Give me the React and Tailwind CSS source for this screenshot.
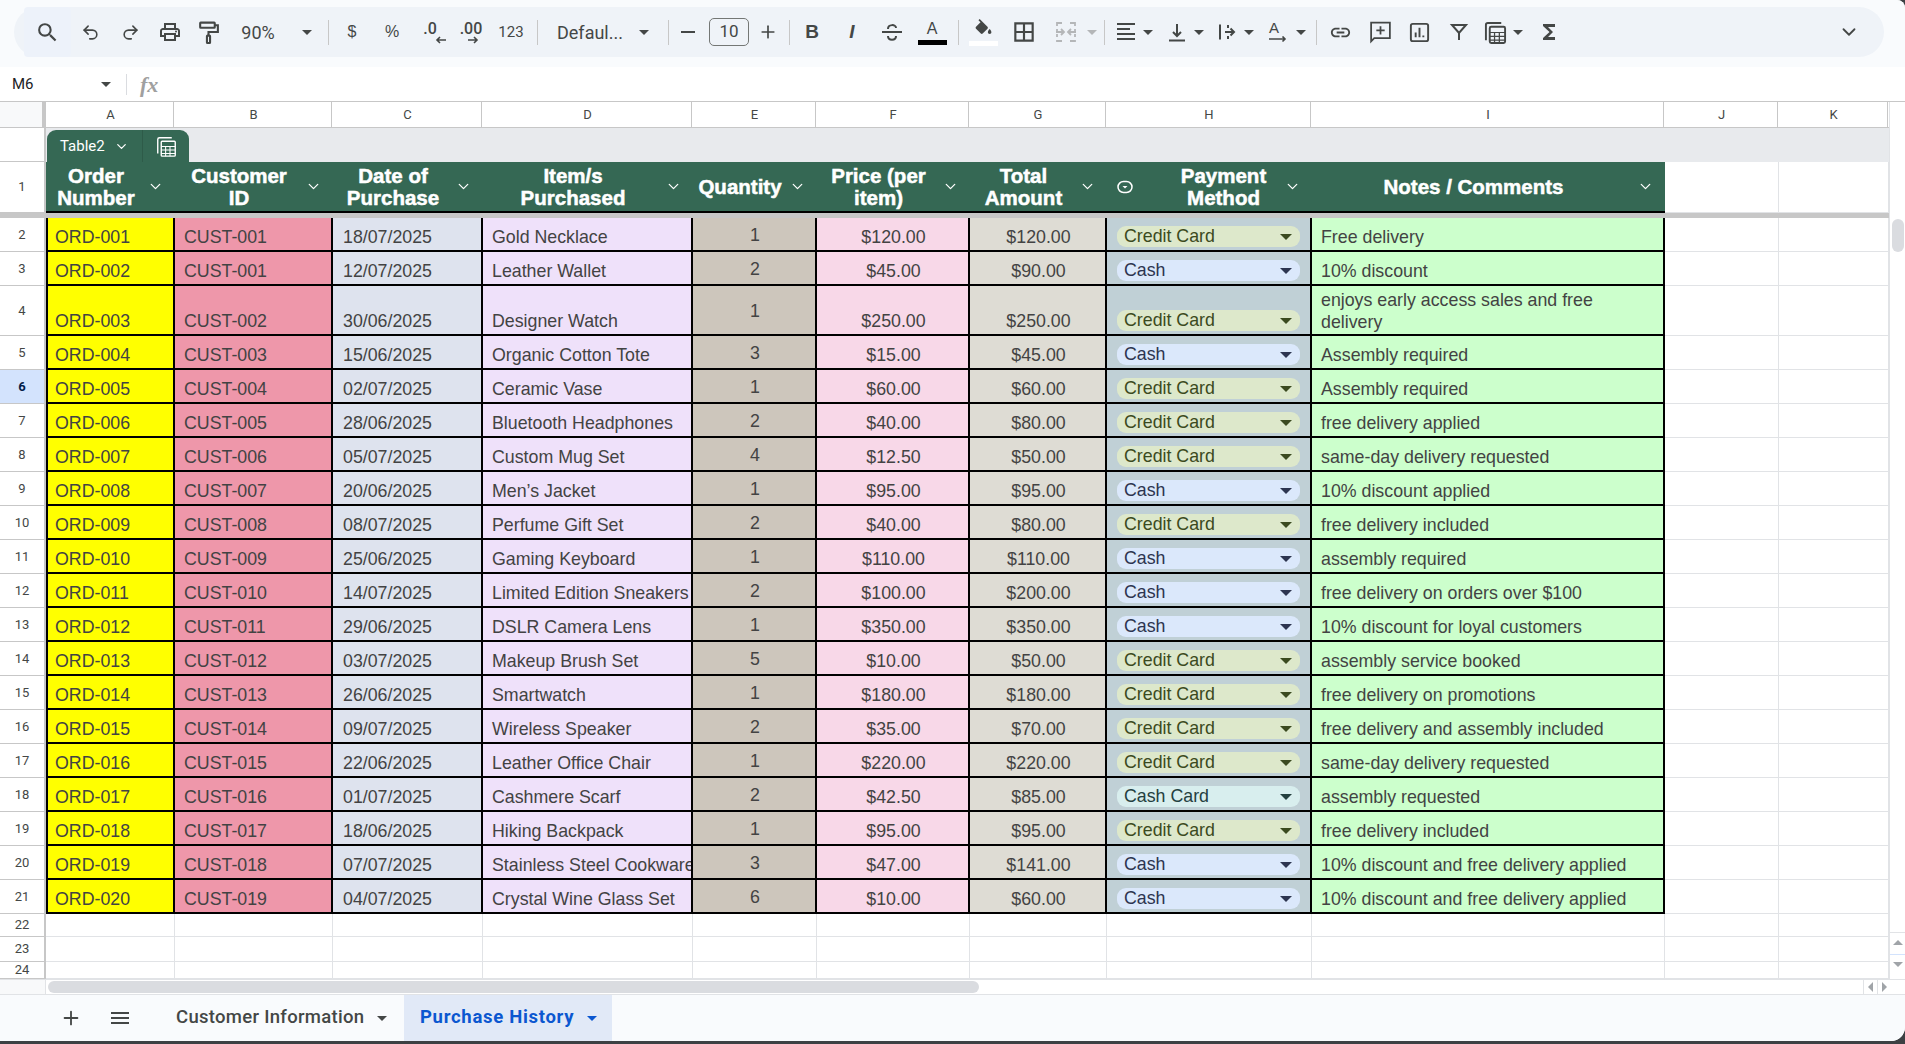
import { ChevronDown, Plus, Redo2, Undo2 } from "lucide-react"

const orders = [
    ["ORD-001", "CUST-001", "18/07/2025", "Gold Necklace", "1", "$120.00", "$120.00", "Credit Card", "Free delivery"],
    ["ORD-002", "CUST-001", "12/07/2025", "Leather Wallet", "2", "$45.00", "$90.00", "Cash", "10% discount"],
    ["ORD-003", "CUST-002", "30/06/2025", "Designer Watch", "1", "$250.00", "$250.00", "Credit Card", "enjoys early access sales and free delivery"],
    ["ORD-004", "CUST-003", "15/06/2025", "Organic Cotton Tote", "3", "$15.00", "$45.00", "Cash", "Assembly required"],
    ["ORD-005", "CUST-004", "02/07/2025", "Ceramic Vase", "1", "$60.00", "$60.00", "Credit Card", "Assembly required"],
    ["ORD-006", "CUST-005", "28/06/2025", "Bluetooth Headphones", "2", "$40.00", "$80.00", "Credit Card", "free delivery applied"],
    ["ORD-007", "CUST-006", "05/07/2025", "Custom Mug Set", "4", "$12.50", "$50.00", "Credit Card", "same-day delivery requested"],
    ["ORD-008", "CUST-007", "20/06/2025", "Men’s Jacket", "1", "$95.00", "$95.00", "Cash", "10% discount applied"],
    ["ORD-009", "CUST-008", "08/07/2025", "Perfume Gift Set", "2", "$40.00", "$80.00", "Credit Card", "free delivery included"],
    ["ORD-010", "CUST-009", "25/06/2025", "Gaming Keyboard", "1", "$110.00", "$110.00", "Cash", "assembly required"],
    ["ORD-011", "CUST-010", "14/07/2025", "Limited Edition Sneakers", "2", "$100.00", "$200.00", "Cash", "free delivery on orders over $100"],
    ["ORD-012", "CUST-011", "29/06/2025", "DSLR Camera Lens", "1", "$350.00", "$350.00", "Cash", "10% discount for loyal customers"],
    ["ORD-013", "CUST-012", "03/07/2025", "Makeup Brush Set", "5", "$10.00", "$50.00", "Credit Card", "assembly service booked"],
    ["ORD-014", "CUST-013", "26/06/2025", "Smartwatch", "1", "$180.00", "$180.00", "Credit Card", "free delivery on promotions"],
    ["ORD-015", "CUST-014", "09/07/2025", "Wireless Speaker", "2", "$35.00", "$70.00", "Credit Card", "free delivery and assembly included"],
    ["ORD-016", "CUST-015", "22/06/2025", "Leather Office Chair", "1", "$220.00", "$220.00", "Credit Card", "same-day delivery requested"],
    ["ORD-017", "CUST-016", "01/07/2025", "Cashmere Scarf", "2", "$42.50", "$85.00", "Cash Card", "assembly requested"],
    ["ORD-018", "CUST-017", "18/06/2025", "Hiking Backpack", "1", "$95.00", "$95.00", "Credit Card", "free delivery included"],
    ["ORD-019", "CUST-018", "07/07/2025", "Stainless Steel Cookware", "3", "$47.00", "$141.00", "Cash", "10% discount and free delivery applied"],
    ["ORD-020", "CUST-019", "04/07/2025", "Crystal Wine Glass Set", "6", "$10.00", "$60.00", "Cash", "10% discount and free delivery applied"],
]

const widths = ["w-[129px]", "w-[158px]", "w-[150px]", "w-[210px]", "w-[124px]", "w-[153px]", "w-[137px]", "w-[205px]", "w-[353px]", "w-[114px]", "w-[110px]"]
const letters = ["A", "B", "C", "D", "E", "F", "G", "H", "I", "J", "K"]

const chipStyles = {
    "Credit Card": "bg-[#dde8cb] text-[#3b4a20]",
    Cash: "bg-[#dbe8fb] text-[#2d3550]",
    "Cash Card": "bg-[#d8eeee] text-[#24403f]",
}

function Svg({ children, size = 22, className = "" }) {
    return (
        <svg viewBox="0 0 24 24" width={size} height={size} fill="#444746" className={className}>
            {children}
        </svg>
    )
}

function Caret({ color = "#444746", className = "h-[5px] w-[10px]" }) {
    return (
        <svg viewBox="0 0 10 5" className={className}>
            <path d="M0 0h10L5 5z" fill={color} />
        </svg>
    )
}

function Sep({ className }) {
    return <div className={`h-[25px] w-px shrink-0 bg-[#c7c7c7] ${className}`} />
}

function Tool({ className, children }) {
    return <div className={`flex h-full shrink-0 items-center justify-center ${className}`}>{children}</div>
}

function DecimalIcon({ label, right }) {
    return (
        <div className="flex flex-col items-center font-['Roboto',sans-serif] text-[#444746]">
            <span className="text-[16px] font-medium leading-[15px]">{label}</span>
            <svg viewBox="0 0 11 8" width="11" height="8" className={right ? "ml-[5px]" : "ml-[20px]"}>
                <path d={right ? "M0 4h9M6 1l3 3-3 3" : "M11 4H2M5 1L2 4l3 3"} fill="none" stroke="#444746" strokeWidth="1.6" />
            </svg>
        </div>
    )
}

function Toolbar() {
    return (
        <div className="h-[67px] shrink-0 bg-[#f9fbfd] px-[14px] pt-[7px]">
            <div className="flex h-[50px] w-[1870px] items-center rounded-[25px] bg-[#eff3f8] pl-[10px] pr-[15px] text-[#444746]">
                <Tool className="w-[47px] rounded-[4px] bg-[#edf2fa]">
                    <Svg size={25}><path d="M15.5 14h-.79l-.28-.27A6.471 6.471 0 0 0 16 9.5 6.5 6.5 0 1 0 9.5 16c1.61 0 3.09-.59 4.23-1.57l.27.28v.79l5 4.99L20.49 19l-4.99-5zm-6 0C7.01 14 5 11.99 5 9.5S7.01 5 9.5 5 14 7.01 14 9.5 11.99 14 9.5 14z" /></Svg>
                </Tool>
                <Tool className="w-[39px]"><Undo2 size={19} strokeWidth={2} color="#444746" /></Tool>
                <Tool className="w-[40px]"><Redo2 size={19} strokeWidth={2} color="#444746" /></Tool>
                <Tool className="w-[39px]">
                    <Svg size={24}><path d="M19 8h-1V3H6v5H5c-1.66 0-3 1.34-3 3v6h4v4h12v-4h4v-6c0-1.66-1.34-3-3-3zM8 5h8v3H8V5zm8 14H8v-4h8v4zm4-4h-2v-2H6v2H4v-4c0-.55.45-1 1-1h14c.55 0 1 .45 1 1v4z" /><circle cx="18" cy="11.5" r="1" /></Svg>
                </Tool>
                <Tool className="w-[39px]">
                    <svg viewBox="0 0 24 24" width="25" height="25" fill="none" stroke="#444746" strokeWidth="2">
                        <rect x="4" y="2.5" width="14" height="5" rx="0.5" />
                        <path d="M18 5h3v6.5h-9V15" />
                        <rect x="10.5" y="15" width="3" height="7" rx="0.5" />
                    </svg>
                </Tool>
                <Tool className="w-[60px] font-['Roboto',sans-serif] text-[18px]">90%</Tool>
                <Tool className="w-[38px]"><Caret /></Tool>
                <Sep className="ml-[2px] mr-[2px]" />
                <Tool className="w-[42px] text-[16px]">$</Tool>
                <Tool className="w-[38px] text-[16px]">%</Tool>
                <Tool className="w-[38px]"><DecimalIcon label=".0" /></Tool>
                <Tool className="w-[44px]"><DecimalIcon label=".00" right /></Tool>
                <Tool className="w-[36px] font-['Roboto',sans-serif] text-[15px]">123</Tool>
                <Sep className="ml-[8px]" />
                <Tool className="ml-[7px] w-[90px] font-['Roboto',sans-serif] text-[18px]">Defaul...</Tool>
                <Tool className="w-[18px]"><Caret /></Tool>
                <Sep className="ml-[15px]" />
                <Tool className="w-[38px]"><div className="h-[2px] w-[14px] bg-[#444746]" /></Tool>
                <div className="ml-[2px] flex h-[28px] w-[40px] shrink-0 items-center justify-center rounded-[5px] border border-[#747775] font-['Roboto',sans-serif] text-[17px]">10</div>
                <Tool className="w-[38px]"><Plus size={20} strokeWidth={2} color="#444746" /></Tool>
                <Sep className="ml-[2px]" />
                <Tool className="w-[44px] text-[19px] font-bold">B</Tool>
                <Tool className="w-[36px] text-[19px] font-bold italic">I</Tool>
                <Tool className="w-[44px]">
                    <svg viewBox="0 0 24 24" width="24" height="24" fill="none" stroke="#444746" strokeWidth="2">
                        <path d="M2 12h20M8 9c0-5 8-5 8-1M8 16c0 5 8 5 8 0" />
                    </svg>
                </Tool>
                <Tool className="w-[36px]">
                    <div className="flex w-[29px] flex-col items-center">
                        <span className="text-[16px] leading-[18px]">A</span>
                        <div className="mt-[2px] h-[5px] w-full bg-black" />
                    </div>
                </Tool>
                <Sep className="ml-[8px]" />
                <Tool className="w-[48px]">
                    <div className="flex w-[29px] flex-col items-center">
                        <Svg size={21}><path d="M16.56 8.94L7.62 0 6.21 1.41l2.38 2.38-5.15 5.15c-.59.59-.59 1.54 0 2.12l5.5 5.5c.29.29.68.44 1.06.44s.77-.15 1.06-.44l5.5-5.5c.59-.58.59-1.53 0-2.12z" /><path d="M19 11.5s-2 2.17-2 3.5c0 1.1.9 2 2 2s2-.9 2-2c0-1.33-2-3.5-2-3.5z" /></Svg>
                        <div className="mt-[1px] h-[5px] w-full bg-white" />
                    </div>
                </Tool>
                <Tool className="w-[34px]">
                    <Svg size={26}><path d="M3 3v18h18V3H3zm8 16H5v-6h6v6zm0-8H5V5h6v6zm8 8h-6v-6h6v6zm0-8h-6V5h6v6z" /></Svg>
                </Tool>
                <Tool className="ml-[5px] w-[40px]">
                    <svg viewBox="0 0 24 24" width="24" height="24" fill="none" stroke="#b4b6b8" strokeWidth="1.8">
                        <path d="M8 3H3v3M3 9v2M3 14v3M3 20v1h5M16 3h5v3M21 9v2M21 14v3M21 20v1h-5M2 12h7M7 9l3 3-3 3M22 12h-7M17 9l-3 3 3 3" />
                    </svg>
                </Tool>
                <Tool className="w-[12px]"><Caret color="#b4b6b8" /></Tool>
                <Sep className="ml-[6px]" />
                <Tool className="ml-[5px] w-[32px]">
                    <svg viewBox="0 0 24 24" width="24" height="24" fill="none" stroke="#444746" strokeWidth="2">
                        <path d="M3 4h18M3 9h13M3 14h18M3 19h18" />
                    </svg>
                </Tool>
                <Tool className="w-[12px]"><Caret /></Tool>
                <Tool className="ml-[7px] w-[32px]">
                    <svg viewBox="0 0 24 24" width="24" height="24" fill="none" stroke="#444746" strokeWidth="2">
                        <path d="M12 4v12M8 12l4 4 4-4M4 20.5h16" />
                    </svg>
                </Tool>
                <Tool className="w-[12px]"><Caret /></Tool>
                <Tool className="ml-[6px] w-[32px]">
                    <svg viewBox="0 0 24 24" width="24" height="24" fill="none" stroke="#444746" strokeWidth="2">
                        <path d="M5 4.5v15M13 5v3M13 16v3M10 12h9M15.5 8.5l3.5 3.5-3.5 3.5" />
                    </svg>
                </Tool>
                <Tool className="w-[12px]"><Caret /></Tool>
                <Tool className="ml-[7px] w-[32px]">
                    <div className="flex h-[24px] w-[18px] flex-col items-start">
                        <span className="text-[15px] leading-[16px]">A</span>
                        <svg viewBox="0 0 18 8" width="18" height="8">
                            <path d="M0 3h16M13.5 0.5L16 3l-2.5 2.5" fill="none" stroke="#444746" strokeWidth="1.6" />
                        </svg>
                    </div>
                </Tool>
                <Tool className="ml-[1px] w-[12px]"><Caret /></Tool>
                <Sep className="ml-[9px]" />
                <Tool className="ml-[5px] w-[36px]">
                    <Svg size={23}><path d="M3.9 12c0-1.71 1.39-3.1 3.1-3.1h4V7H7c-2.76 0-5 2.24-5 5s2.24 5 5 5h4v-1.9H7c-1.71 0-3.1-1.39-3.1-3.1zM8 13h8v-2H8v2zm9-6h-4v1.9h4c1.71 0 3.1 1.39 3.1 3.1s-1.39 3.1-3.1 3.1h-4V17h4c2.76 0 5-2.24 5-5s-2.24-5-5-5z" /></Svg>
                </Tool>
                <Tool className="w-[44px]">
                    <svg viewBox="0 0 24 24" width="25" height="25" fill="none" stroke="#444746" strokeWidth="1.7">
                        <path d="M3 2.5h18v15H6l-3 3zM12 6v8M8 10h8" />
                    </svg>
                </Tool>
                <Tool className="w-[34px]">
                    <svg viewBox="0 0 24 24" width="23" height="23" fill="none" stroke="#444746" strokeWidth="2">
                        <rect x="3" y="3" width="18" height="18" rx="2" />
                        <path d="M8 17v-5M12 17V7M16 17v-2" />
                    </svg>
                </Tool>
                <Tool className="w-[46px]">
                    <svg viewBox="0 0 24 24" width="24" height="24" fill="none" stroke="#444746" strokeWidth="2">
                        <path d="M5 5h14l-7 8zM12 13v7" />
                    </svg>
                </Tool>
                <Tool className="w-[26px]">
                    <svg viewBox="0 0 24 24" width="23" height="23" fill="none" stroke="#444746" strokeWidth="2">
                        <path d="M18 2H4a2 2 0 0 0-2 2v16" />
                        <rect x="6" y="6" width="16" height="17" rx="1.5" />
                        <path d="M6 12h16M6 16h16M6 20h16M11 12v11M16 12v11" strokeWidth="1.3" />
                    </svg>
                </Tool>
                <Tool className="ml-[4px] w-[12px]"><Caret /></Tool>
                <Tool className="ml-[6px] w-[38px]">
                    <Svg size={24}><path d="M18 4H6v2l6.5 6L6 18v2h12v-3h-7l5-5-5-5h7z" /></Svg>
                </Tool>
                <Tool className="ml-auto w-[40px]"><ChevronDown size={22} strokeWidth={2} color="#444746" /></Tool>
            </div>
        </div>
    )
}

function FormulaBar() {
    return (
        <div className="flex h-[35px] shrink-0 items-center border-b border-[#c7c7c7] bg-white">
            <div className="w-[90px] pl-[12px] font-['Roboto',sans-serif] text-[15px] text-[#202124]">M6</div>
            <Caret className="ml-[11px] h-[5px] w-[10px]" />
            <div className="ml-[15px] h-[21px] w-px bg-[#dadce0]" />
            <span className="ml-[13px] font-['Liberation_Serif',serif] text-[22px] font-bold italic text-[#a0a0a0]">fx</span>
        </div>
    )
}

function ColumnHeaders() {
    return (
        <div className="flex h-[26px] shrink-0 border-b border-[#c7c7c7]">
            <div className="w-[46px] shrink-0 border-r-[4px] border-[#c7c7c7] bg-[#f8f9fa]" />
            {letters.map((letter, i) => (
                <div
                    key={letter}
                    className={`${i === 0 ? "w-[128px]" : widths[i]} flex shrink-0 items-center justify-center border-r border-[#c7c7c7] pl-[2px] font-['Roboto',sans-serif] text-[13px] text-[#444746]`}
                >
                    {letter}
                </div>
            ))}
        </div>
    )
}

function RowNumber({ n, selected }) {
    return (
        <div
            className={`flex w-[46px] shrink-0 items-center justify-center border-b border-r-2 border-[#c7c7c7] font-['Roboto',sans-serif] text-[13px] ${selected ? "bg-[#d3e3fd] font-bold text-[#041e49]" : "bg-white text-[#444746]"}`}
        >
            {n}
        </div>
    )
}

function BlankCells({ cols }) {
    return cols.map((i) => (
        <div key={i} className={`${widths[i]} shrink-0 border-b border-r border-[#e1e3e6] bg-white`} />
    ))
}

function HeaderCell({ i, label, dropdown }) {
    return (
        <div className={`${widths[i]} flex shrink-0 items-center ${i === 0 ? "pl-[1px]" : ""}`}>
            {dropdown && (
                <div className="w-[58px] shrink-0 pl-[9px]">
                    <svg viewBox="0 0 18 18" width="18" height="18" fill="none" stroke="white" strokeWidth="1.5">
                        <rect x="2" y="3.5" width="14" height="11" rx="5.5" />
                        <path d="M6.5 8h5L9 10.5z" fill="white" stroke="none" />
                    </svg>
                </div>
            )}
            <div className="min-w-0 flex-1 whitespace-pre-line text-center text-[20.5px] font-bold leading-[22px] text-white [-webkit-text-stroke:0.5px_white]">
                {label}
            </div>
            <div className="mr-[10px] flex w-[20px] shrink-0 justify-center">
                <ChevronDown size={17} strokeWidth={1.8} color="white" />
            </div>
        </div>
    )
}

function TableBand() {
    return (
        <div className="flex h-[34px] shrink-0 bg-[#e8eaed]">
            <div className="w-[46px] shrink-0 border-b border-r-2 border-[#c7c7c7] bg-white" />
            <div className="ml-[1px] mt-[2px] flex h-[32px] w-[142px] rounded-t-[9px] bg-[#356854] text-white">
                <div className="flex w-[96px] items-center border-r border-[#2e5b49] pl-[13px] font-['Roboto',sans-serif] text-[15px]">
                    Table2
                    <ChevronDown size={15} strokeWidth={2} className="ml-[9px]" />
                </div>
                <div className="flex flex-1 items-center justify-center">
                    <svg viewBox="0 0 24 24" width="21" height="21" fill="none" stroke="white" strokeWidth="1.6">
                        <path d="M18 2H4a2 2 0 0 0-2 2v16" />
                        <rect x="6" y="6" width="16" height="17" rx="1" />
                        <path d="M6 12h16M6 16h16M6 20h16M11 12v11M16 12v11" strokeWidth="1.2" />
                    </svg>
                </div>
            </div>
        </div>
    )
}

function TableHeader() {
    const labels = ["Order\nNumber", "Customer\nID", "Date of\nPurchase", "Item/s\nPurchased", "Quantity", "Price (per\nitem)", "Total\nAmount", "Payment\nMethod", "Notes / Comments"]
    return (
        <div className="flex h-[51px] shrink-0">
            <RowNumber n={1} />
            <div className="flex border-b-2 border-black bg-[#356854]">
                {labels.map((label, i) => (
                    <HeaderCell key={label} i={i} label={label} dropdown={i === 7} />
                ))}
            </div>
            <BlankCells cols={[9, 10]} />
        </div>
    )
}

function DataCell({ className, children }) {
    return (
        <div className={`flex shrink-0 overflow-hidden border-b-2 border-r-2 border-black pb-[1px] text-[17.8px] leading-[24px] text-[#434343] ${className}`}>
            {children}
        </div>
    )
}

function Chip({ value }) {
    return (
        <div className={`mb-[2px] ml-[1px] flex h-[21px] w-[183px] items-center justify-between rounded-[9px] pl-[7px] pr-[8px] ${chipStyles[value]}`}>
            <span className="leading-[21px]">{value}</span>
            <Caret color="currentColor" className="h-[6px] w-[12px]" />
        </div>
    )
}

function DataRow({ row, index }) {
    const height = index === 2 ? "h-[50px]" : "h-[34px]"
    return (
        <div className={`flex shrink-0 ${height}`}>
            <RowNumber n={index + 2} selected={index === 4} />
            <DataCell className={`${widths[0]} items-end whitespace-nowrap border-l-2 bg-[#ffff00] pl-[7px] text-[#4c4c00]`}>{row[0]}</DataCell>
            <DataCell className={`${widths[1]} items-end whitespace-nowrap bg-[#ee97aa] pl-[9px]`}>{row[1]}</DataCell>
            <DataCell className={`${widths[2]} items-end whitespace-nowrap bg-[#dee3ee] pl-[10px]`}>{row[2]}</DataCell>
            <DataCell className={`${widths[3]} items-end whitespace-nowrap bg-[#efe1fa] pl-[9px]`}>{row[3]}</DataCell>
            <DataCell className={`${widths[4]} items-center justify-center whitespace-nowrap bg-[#cdc6bc] pl-[2px] pt-[3px]`}>{row[4]}</DataCell>
            <DataCell className={`${widths[5]} items-end justify-center whitespace-nowrap bg-[#f8d8e8] pl-[2px]`}>{row[5]}</DataCell>
            <DataCell className={`${widths[6]} items-end justify-center whitespace-nowrap bg-[#dedcd4] pl-[2px]`}>{row[6]}</DataCell>
            <DataCell className={`${widths[7]} items-end whitespace-nowrap bg-[#c0d0d6] pl-[9px]`}><Chip value={row[7]} /></DataCell>
            <DataCell className={`${widths[8]} items-end whitespace-normal bg-[#ccffcc] pl-[9px] pr-[10px]`}>
                <span className={index === 2 ? "block max-w-[290px] leading-[22px]" : "block leading-[24px]"}>{row[8]}</span>
            </DataCell>
            <BlankCells cols={[9, 10]} />
        </div>
    )
}

function EmptyRow({ n, height }) {
    return (
        <div className={`flex shrink-0 ${height}`}>
            <RowNumber n={n} />
            <BlankCells cols={[0, 1, 2, 3, 4, 5, 6, 7, 8, 9, 10]} />
        </div>
    )
}

function VerticalScrollbar() {
    return (
        <div className="flex w-[16px] shrink-0 flex-col items-center border-l border-[#e1e3e6] bg-white pt-[117px]">
            <div className="h-[33px] w-[12px] rounded-[6px] bg-[#dadce0]" />
            <div className="mt-auto flex h-[20px] w-full items-center justify-center border-t border-[#e1e3e6]">
                <Caret color="#a0a4a8" className="h-[5px] w-[10px] rotate-180" />
            </div>
            <div className="mb-[5px] mt-[2px] flex h-[20px] w-full items-center justify-center border-t border-[#d3e3fd]">
                <Caret color="#a0a4a8" />
            </div>
        </div>
    )
}

function HorizontalScrollbar() {
    return (
        <div className="flex h-[16px] shrink-0 items-center border-y border-[#e1e3e6] bg-white">
            <div className="h-full w-[46px] shrink-0 border-r border-[#e1e3e6] bg-[#f8f9fa]" />
            <div className="ml-[2px] h-[12px] w-[931px] rounded-[6px] bg-[#dadce0]" />
            <div className="ml-auto flex h-full w-[42px] items-center justify-around border-l border-[#e1e3e6] pl-[2px] pr-[16px]">
                <svg viewBox="0 0 5 10" width="5" height="10"><path d="M5 0v10L0 5z" fill="#a0a4a8" /></svg>
                <div className="h-full w-px bg-[#e1e3e6]" />
                <svg viewBox="0 0 5 10" width="5" height="10"><path d="M0 0v10l5-5z" fill="#a0a4a8" /></svg>
            </div>
        </div>
    )
}

function SheetTabs() {
    return (
        <div className="flex h-[46px] shrink-0 items-stretch bg-[#f9fbfd] font-['Roboto',sans-serif] text-[18.5px]">
            <div className="ml-[59px] flex w-[24px] items-center justify-center">
                <Plus size={22} strokeWidth={2} color="#444746" />
            </div>
            <div className="ml-[25px] flex w-[24px] items-center justify-center">
                <Svg size={24}><path d="M3 18h18v-2H3v2zm0-5h18v-2H3v2zm0-7v2h18V6H3z" /></Svg>
            </div>
            <div className="ml-[44px] flex w-[228px] items-center font-medium tracking-[0.3px] text-[#444746]">
                Customer Information
                <Caret className="ml-[13px] h-[5px] w-[10px]" />
            </div>
            <div className="flex w-[208px] items-center bg-[#e1e9f7] pl-[16px] font-bold tracking-[0.7px] text-[#0b57d0]">
                Purchase History
                <Caret color="#0b57d0" className="ml-[13px] h-[5px] w-[10px]" />
            </div>
        </div>
    )
}

export default function App() {
    return (
        <div className="h-[1044px] w-[1905px] overflow-hidden bg-[#3c4043] font-['Liberation_Sans',Arial,sans-serif]">
            <div className="flex h-[1041px] w-[1905px] flex-col overflow-hidden rounded-br-[14px] rounded-tr-[8px] bg-white">
                <Toolbar />
                <FormulaBar />
                <div className="flex min-h-0 flex-1">
                    <div className="flex w-[1889px] flex-col overflow-hidden">
                        <ColumnHeaders />
                        <TableBand />
                        <TableHeader />
                        <div className="h-[5px] shrink-0 bg-[#c7c7c7]" />
                        {orders.map((row, i) => (
                            <DataRow key={row[0]} row={row} index={i} />
                        ))}
                        <EmptyRow n={22} height="h-[23px]" />
                        <EmptyRow n={23} height="h-[25px]" />
                        <EmptyRow n={24} height="h-[17px]" />
                    </div>
                    <VerticalScrollbar />
                </div>
                <HorizontalScrollbar />
                <SheetTabs />
            </div>
        </div>
    )
}
